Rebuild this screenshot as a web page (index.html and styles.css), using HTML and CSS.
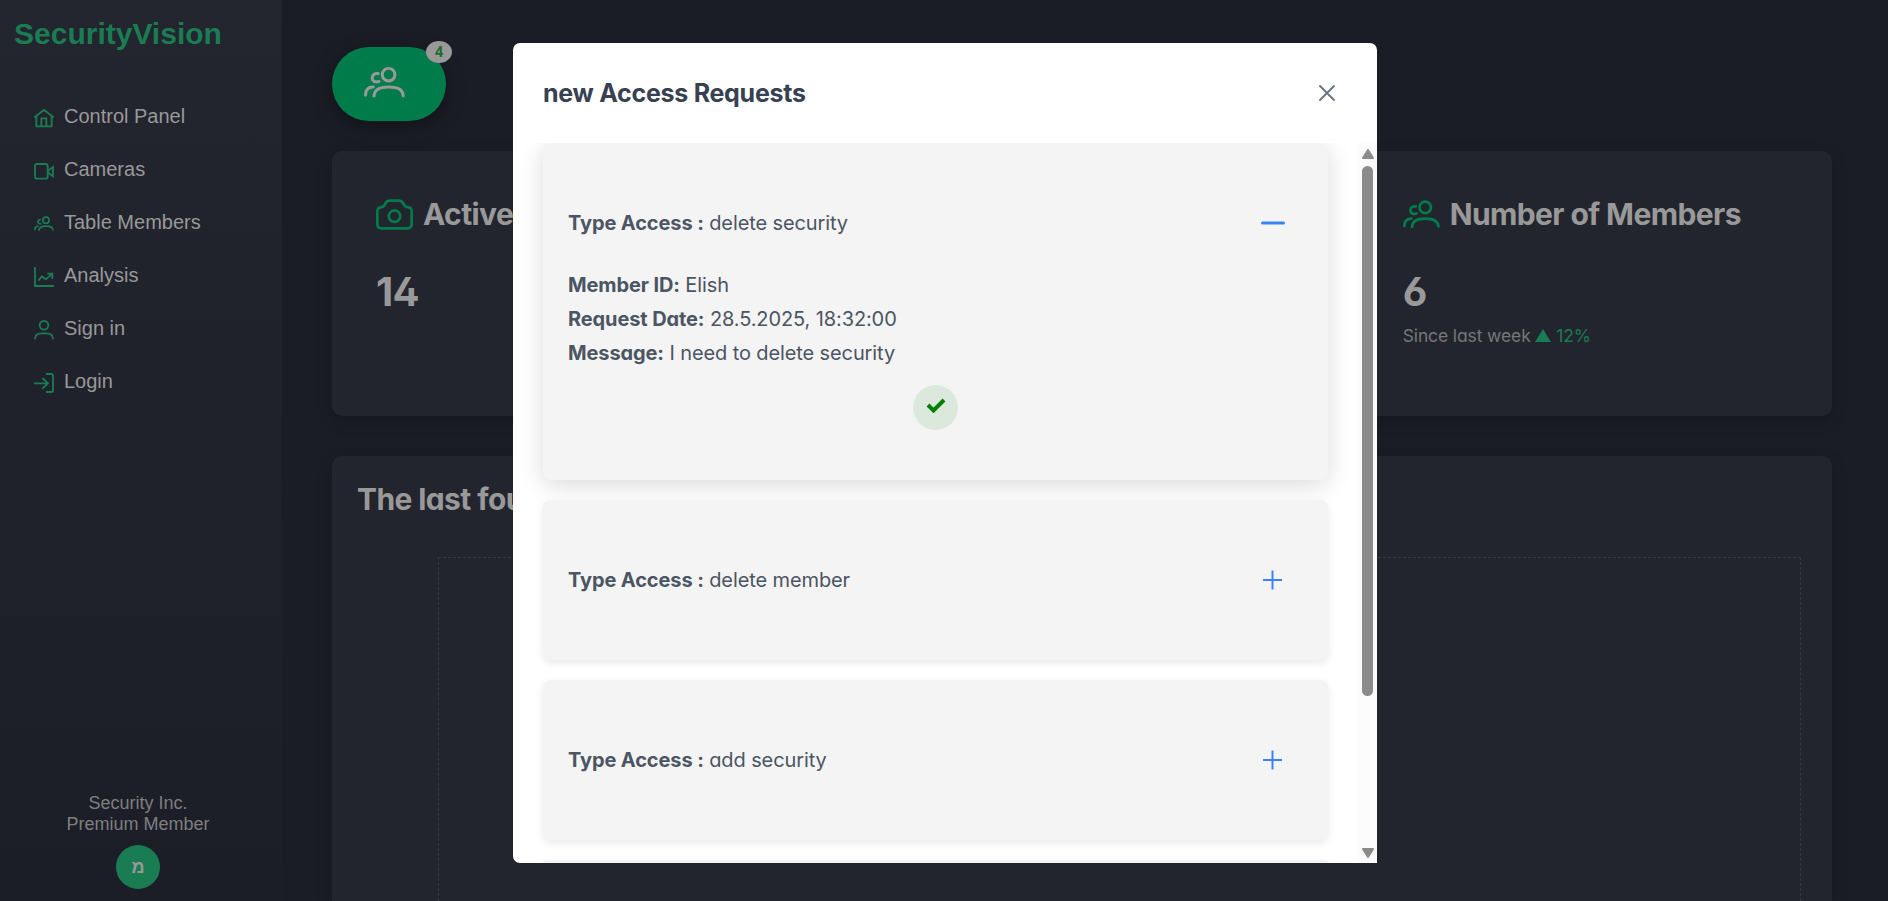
FILE: index.html
```html
<!DOCTYPE html>
<html lang="en">
<head>
<meta charset="utf-8">
<title>SecurityVision</title>
<link rel="stylesheet" href="styles.css">
</head>
<body>
<svg class="defs" width="0" height="0">
  <symbol id="people" viewBox="0 0 110 82">
    <circle cx="66" cy="20" r="17"/>
    <path d="M38 17C28 16 22 21 22 29C22 37 30 42 40 38M4 75C4 60 12 53 25 53M27 78C27 60 40 53 66 53C92 53 105 60 105 77"/>
  </symbol>
</svg>
<div class="app">
  <aside class="sidebar">
    <div class="brand">SecurityVision</div>
    <nav class="menu">
      <a class="item"><svg class="ico" viewBox="0 0 60 60"><path d="M1 28L30 6L59 28M7 25V55H53V25M22 55V31H37V55"/></svg>Control Panel</a>
      <a class="item"><svg class="ico" viewBox="0 0 60 60"><rect x="3" y="9" width="38" height="44" rx="6"/><path d="M41 30L57 18V46L41 34"/></svg>Cameras</a>
      <a class="item"><svg class="ico people-sm" viewBox="0 0 110 110"><use href="#people"/></svg>Table Members</a>
      <a class="item"><svg class="ico" viewBox="0 0 60 60"><path d="M3 0V57H60M13 41L24 28L35 37L55 20M40 20H55V36"/></svg>Analysis</a>
      <a class="item"><svg class="ico" viewBox="0 0 60 60"><circle cx="30" cy="16" r="13"/><path d="M3 58C3 44 10 40 22 40H38C50 40 57 44 57 58"/></svg>Sign in</a>
      <a class="item"><svg class="ico" viewBox="0 0 60 60"><path d="M0 31H42M25 15L42 31L25 47M36 3H52Q57 3 57 8V52Q57 57 52 57H36"/></svg>Login</a>
    </nav>
    <div class="account">
      <div>Security Inc.</div>
      <div>Premium Member</div>
      <div class="avatar">מ</div>
    </div>
  </aside>
  <main class="main">
    <button class="requests"><svg class="ico-req" viewBox="0 0 110 82"><use href="#people"/></svg><span class="badge">4</span></button>
    <section class="stats">
      <article class="stat">
        <h2 class="stat-title"><svg class="ico-stat" viewBox="0 -9 110 110"><path d="M4 38C4 28 9 24 17 24C28 24 25 5 40 5H68C84 5 81 24 93 24C101 24 106 28 106 38V74Q106 87 93 87H17Q4 87 4 74Z"/><circle cx="55" cy="51" r="17"/></svg>Active</h2>
        <div class="stat-value">14</div>
      </article>
      <article class="stat"></article>
      <article class="stat">
        <h2 class="stat-title"><svg class="ico-stat" viewBox="0 0 110 110"><use href="#people"/></svg>Number of Members</h2>
        <div class="stat-value">6</div>
        <div class="stat-note">Since last week <span class="up"><svg class="tri" viewBox="0 0 16 13"><path d="M0 13L8 0L16 13Z"/></svg> 12%</span></div>
      </article>
    </section>
    <section class="panel">
      <h2 class="panel-title">The last four</h2>
      <div class="plot"></div>
    </section>
  </main>
</div>
<div class="dialog">
  <header class="dialog-head">
    <span>new Access Requests</span>
    <svg class="close" viewBox="0 0 18 18"><path d="M2 2L16 16M16 2L2 16"/></svg>
  </header>
  <div class="dialog-body">
    <div class="list">
      <article class="card open">
        <div class="row"><p><b>Type Access :</b> delete security</p><svg class="toggle" viewBox="0 0 24 24"><path class="thick" d="M1.500 12H22.500"/></svg></div>
        <div class="details">
          <p><b>Member ID:</b> Elish</p>
          <p><b>Request Date:</b> 28.5.2025, 18:32:00</p>
          <p><b>Message:</b> I need to delete security</p>
        </div>
        <div class="approve"><svg class="check" viewBox="0 0 20 16"><path d="M2 8L7.500 13.500L18 3"/></svg></div>
      </article>
      <article class="card"><div class="row"><p><b>Type Access :</b> delete member</p><svg class="toggle" viewBox="0 0 24 24"><path d="M2 12H21M11.500 2.500V21.500"/></svg></div></article>
      <article class="card"><div class="row"><p><b>Type Access :</b> add security</p><svg class="toggle" viewBox="0 0 24 24"><path d="M2 12H21M11.500 2.500V21.500"/></svg></div></article>
      <article class="card last"></article>
    </div>
    <div class="scrollbar">
      <svg class="arrow" viewBox="0 0 12 10"><path d="M6 1L11 9H1Z"/></svg>
      <div class="thumb"></div>
      <svg class="arrow down" viewBox="0 0 12 10"><path d="M6 9L11 1H1Z"/></svg>
    </div>
  </div>
</div>
</body>
</html>
```
FILE: styles.css
```css
* { box-sizing: border-box; }
body {
  margin: 0;
  height: 901px;
  overflow: hidden;
  background: #1a1d26;
  color: #999;
  font-family: Inter, "Liberation Sans", sans-serif;
  font-feature-settings: "cv02", "cv03", "cv04", "cv11";
}
h2, p { margin: 0; }
svg { fill: none; flex: none; }
.defs { position: absolute; }
.app { display: flex; height: 901px; overflow: hidden; }

.sidebar {
  width: 282px;
  display: flex;
  flex-direction: column;
  background: linear-gradient(#23252f, #1b1e26);
  font-family: "Liberation Sans", Arial, sans-serif;
  font-feature-settings: normal;
}
.brand {
  padding: 16px 0 0 14px;
  font-size: 30px;
  line-height: 36px;
  font-weight: 700;
  color: #1a7c53;
}
.menu { padding: 38px 0 0 34px; }
.item {
  display: flex;
  align-items: center;
  gap: 10px;
  height: 53px;
  font-size: 20px;
}
.ico {
  width: 20px;
  height: 20px;
  margin-top: 2px;
  stroke: #1a7c53;
  stroke-width: 5.5;
}
.people-sm { stroke-width: 9; }
.account {
  width: 276px;
  margin-top: auto;
  padding-bottom: 12px;
  text-align: center;
  font-size: 18px;
  line-height: 21px;
  color: #7f7f80;
}
.avatar {
  width: 44px;
  height: 44px;
  margin: 10px auto 0;
  border-radius: 50%;
  background: #1a7c53;
  color: #999;
  font-weight: 700;
  line-height: 44px;
}

.main {
  display: flex;
  flex-direction: column;
  width: 1550px;
  height: 901px;
  padding: 47px 0 0 50px;
}
.requests {
  position: relative;
  display: flex;
  flex: none;
  width: 114px;
  height: 74px;
  padding: 20px 32px;
  border: 0;
  border-radius: 37px;
  background: #007c4b;
  box-shadow: 0 5px 19px rgba(0, 0, 0, .35);
}
.ico-req { width: 41px; height: 31px; stroke: #999; stroke-width: 8; stroke-linecap: round; }
.badge {
  position: absolute;
  top: -6px;
  right: -6px;
  width: 26px;
  height: 22px;
  border-radius: 50%;
  background: #999;
  color: #1c6b2a;
  font: 700 15px/22px Roboto, sans-serif;
  text-align: center;
}
.stats {
  display: grid;
  flex: none;
  grid-template-columns: repeat(3, 1fr);
  gap: 40px;
  height: 265px;
  margin-top: 30px;
}
.stat, .panel { background: #23252e; box-shadow: 0 5px 15px rgba(0, 0, 0, .2); }
.stat { padding: 40px 0 0 44px; border-radius: 10px; }
.stat-title {
  display: flex;
  align-items: center;
  gap: 10px;
  height: 46px;
  font-size: 30px;
  font-weight: 700;
  letter-spacing: -.6px;
  white-space: nowrap;
}
.ico-stat { width: 37px; height: 37px; stroke: #007c4b; stroke-width: 8; stroke-linecap: round; }
.stat-value { margin-top: 30px; font-size: 40px; line-height: 50px; font-weight: 700; letter-spacing: -.8px; }
.stat-note { margin-top: 6px; font-size: 17.5px; line-height: 26px; letter-spacing: -.12px; color: #767779; }
.up { color: #1a7c53; }
.tri { width: 16px; height: 13px; fill: #1a7c53; }
.panel {
  display: flex;
  flex: 1;
  flex-direction: column;
  margin-top: 40px;
  padding: 25px 31px 0 25px;
  border-radius: 10px 10px 0 0;
}
.panel-title { font-size: 30px; line-height: 37px; font-weight: 700; letter-spacing: -.6px; }
.plot { flex: 1; margin: 39px 0 0 81px; border: 1px dashed #353741; border-bottom: 0; }

.dialog {
  position: absolute;
  left: 513px;
  top: 43px;
  width: 864px;
  height: 820px;
  display: flex;
  flex-direction: column;
  border-radius: 7px 7px 0 7px;
  overflow: hidden;
  background: #fff;
  color: #4b5563;
}
.dialog-head {
  height: 100px;
  padding: 0 41px 0 30px;
  display: flex;
  flex: none;
  align-items: center;
  justify-content: space-between;
  color: #374151;
  font-size: 25px;
  font-weight: 700;
  letter-spacing: -.27px;
}
.close { width: 18px; height: 18px; stroke: #6b7280; stroke-width: 1.9; stroke-linecap: round; }
.dialog-body { display: flex; height: 720px; overflow: hidden; }
.list {
  width: 845px;
  height: 720px;
  padding: 0 30px;
  display: flex;
  flex-direction: column;
  gap: 20px;
  overflow: hidden;
}
.card {
  flex: none;
  height: 160px;
  padding: 0 25px;
  display: flex;
  flex-direction: column;
  justify-content: center;
  border-radius: 8px;
  background: #f4f4f4;
  box-shadow: 0 3px 8px rgba(0, 0, 0, .09);
  font-size: 20px;
  line-height: 34px;
  letter-spacing: -.11px;
}
.card b { font-weight: 700; }
.last { height: 3px; border-radius: 8px 8px 0 0; }
.open {
  height: 337px;
  padding-top: 63px;
  justify-content: flex-start;
  box-shadow: 0 5px 25px rgba(0, 0, 0, .15);
}
.row { display: flex; align-items: center; justify-content: space-between; margin-right: 18px; }
.toggle { width: 24px; height: 24px; stroke: #3b82f6; stroke-width: 2; }
.thick { stroke-width: 3; stroke-linecap: round; }
.details { margin-top: 28px; }
.approve {
  display: flex;
  justify-content: center;
  width: 45px;
  height: 45px;
  margin: 14.5px auto 0;
  padding-top: 12px;
  border-radius: 50%;
  background: #dce8dc;
}
.check { width: 20px; height: 16px; stroke: #008000; stroke-width: 4; }
.scrollbar {
  width: 19px;
  display: flex;
  flex-direction: column;
  align-items: center;
  padding: 6px 0 5px;
  background: #fcfcfc;
}
.arrow { width: 12px; height: 10px; fill: #8b8b8b; stroke: #8b8b8b; stroke-width: 2; stroke-linejoin: round; }
.thumb { width: 11px; height: 530px; margin-top: 7px; border-radius: 6px; background: #8b8b8b; }
.down { margin-top: auto; }
```
